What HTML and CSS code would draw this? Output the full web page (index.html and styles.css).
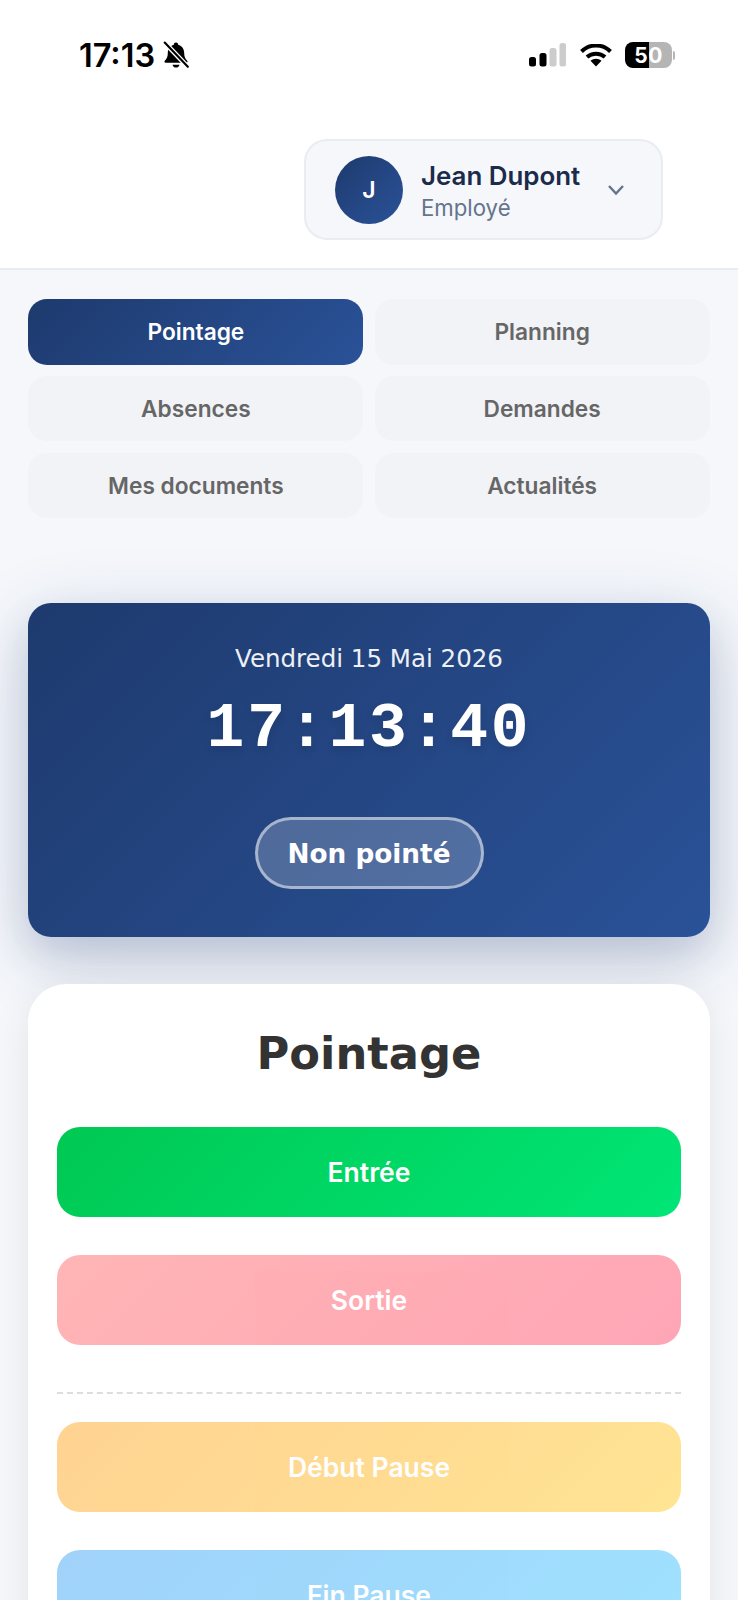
FILE: index.html
```html
<!DOCTYPE html>
<html>
<head lang="fr">
    <meta charset="UTF-8">
    <title>Pointage</title>

    <link rel="stylesheet" href="styles.css">
</head>
<body>
    <div class="screen">
        <header class="top">
            <div class="status">
                <div class="status-left">
                    <span class="status-time">17:13</span>
                    <svg class="bell" viewBox="0 0 26 26" width="28" height="28">
                        <path d="M13 1.500c1.200 0 2 .8 2 1.900 3.600.9 5.600 3.900 5.600 7.800 0 3.600 1 5.400 2.800 7.100.7.700.3 1.900-.8 1.900H3.400c-1.100 0-1.500-1.200-.8-1.900 1.800-1.700 2.800-3.500 2.800-7.100 0-3.900 2-6.900 5.600-7.800 0-1.100.8-1.900 2-1.900z" fill="#000"/>
                        <path d="M9.800 22h6.400c-.2 1.500-1.500 2.700-3.200 2.700S10 23.500 9.800 22z" fill="#000"/>
                        <path d="M2.500 1.500 L24 24" stroke="#fff" stroke-width="4.500" fill="none"/>
                        <path d="M2.500 1.500 L24 24" stroke="#000" stroke-width="2" stroke-linecap="round" fill="none"/>
                    </svg>
                </div>
                <div class="status-right">
                    <svg class="signal" viewBox="0 0 37 24" width="37" height="24">
                        <rect x="0" y="14" width="7" height="9.500" rx="2.500" fill="#000"/>
                        <rect x="10.500" y="10" width="7" height="13.500" rx="2.500" fill="#000"/>
                        <rect x="20.500" y="5" width="7" height="18.500" rx="2.500" fill="#ccc"/>
                        <rect x="30.500" y="0" width="6.500" height="23.500" rx="2.500" fill="#ccc"/>
                    </svg>
                    <svg class="wifi" viewBox="0 0 32 23" width="32" height="23">
                        <path d="M1.500 7.500 C9.500 -0.500 22.500 -0.500 30.500 7.500" stroke="#000" stroke-width="4" fill="none"/>
                        <path d="M7 13 C12 8.500 20 8.500 25 13" stroke="#000" stroke-width="4" fill="none"/>
                        <path d="M10.500 16.700 C13.500 14 18.500 14 21.500 16.700 L16 22.500 Z" fill="#000"/>
                    </svg>
                    <div class="battery">
                        <div class="battery-body">
                            <span class="battery-level">50</span>
                        </div>
                        <span class="battery-nub"></span>
                    </div>
                </div>
            </div>
            <div class="user-row">
                <div class="user-card">
                    <div class="avatar">J</div>
                    <div class="user-info">
                        <div class="user-name">Jean Dupont</div>
                        <div class="user-role">Employé</div>
                    </div>
                    <svg class="chevron" viewBox="0 0 18 12" width="18" height="12">
                        <path d="M2 2 L9 9.500 L16 2" stroke="#64748b" stroke-width="2.400" fill="none"/>
                    </svg>
                </div>
            </div>
        </header>

        <nav class="tabs">
            <a class="tab active">Pointage</a>
            <a class="tab">Planning</a>
            <a class="tab">Absences</a>
            <a class="tab">Demandes</a>
            <a class="tab">Mes documents</a>
            <a class="tab">Actualités</a>
        </nav>

        <main class="content">
            <section class="clock">
                <div class="clock-date">Vendredi 15 Mai 2026</div>
                <div class="clock-time">17:13:40</div>
                <div class="clock-badge">Non pointé</div>
            </section>

            <section class="panel">
                <h2 class="panel-title">Pointage</h2>
                <button class="btn btn-in">Entrée</button>
                <button class="btn btn-out">Sortie</button>
                <hr class="divider">
                <button class="btn btn-break">Début Pause</button>
                <button class="btn btn-resume">Fin Pause</button>
            </section>
        </main>
    </div>
</body>
</html>
```

FILE: styles.css
```css
* {
    box-sizing: border-box;
}

body {
    margin: 0;
    background: #f5f7fb;
    font-family: "Inter", "Liberation Sans", sans-serif;
}

.screen {
    height: 1600px;
    overflow: hidden;
}

/* top bar */
.top {
    height: 270px;
    background: #fff;
    border-bottom: 2px solid #e9ecf1;
}

.status {
    display: flex;
    justify-content: space-between;
    align-items: center;
    height: 26px;
    padding: 0 63px 0 79px;
    position: relative;
    top: 42px;
}

.status-left {
    display: flex;
    align-items: center;
    gap: 7px;
}

.status-time {
    font-size: 32.500px;
    font-weight: 600;
    color: #000;
}

.status-right {
    display: flex;
    align-items: center;
}

.signal {
    margin-right: 14px;
}

.wifi {
    margin-right: 13px;
}

.battery {
    display: flex;
    align-items: center;
    gap: 1px;
}

.battery-body {
    width: 47px;
    height: 26px;
    border-radius: 8px;
    background: linear-gradient(90deg, #000 0, #000 51%, #b5b5b5 51%, #b5b5b5 100%);
    display: flex;
    align-items: center;
    justify-content: center;
}

.battery-level {
    font-size: 21px;
    font-weight: 700;
    color: #fff;
    letter-spacing: 0.5px;
}

.battery-nub {
    width: 2px;
    height: 9px;
    border-radius: 0 2px 2px 0;
    background: #b5b5b5;
}

.user-row {
    display: flex;
    justify-content: flex-end;
    padding: 113px 75px 0 0;
}

.user-card {
    display: flex;
    align-items: center;
    width: 359px;
    height: 101px;
    padding: 0 36px 0 29px;
    background: #f5f7fb;
    border: 2px solid #e9ecf1;
    border-radius: 23px;
}

.avatar {
    flex: none;
    width: 68px;
    height: 68px;
    border-radius: 50%;
    background: linear-gradient(135deg, #1e3a6e, #2a5298);
    color: #fff;
    font-size: 23px;
    font-weight: 600;
    display: flex;
    align-items: center;
    justify-content: center;
}

.user-info {
    margin-left: 18px;
    flex: 1;
    padding-top: 2px;
}

.user-name {
    font-size: 25.900px;
    font-weight: 600;
    color: #1a2b4b;
    line-height: 33px;
}

.user-role {
    font-size: 22.200px;
    color: #64748b;
    line-height: 30px;
    margin-top: 1px;
}

/* tabs */
.tabs {
    display: grid;
    grid-template-columns: 1fr 1fr;
    gap: 11.350px;
    padding: 29px 28.400px 0;
}

.tab {
    height: 65.500px;
    display: flex;
    align-items: center;
    justify-content: center;
    border-radius: 19px;
    background: #f1f3f7;
    color: #666;
    font-size: 22.700px;
    font-weight: 600;
}

.tab.active {
    background: linear-gradient(135deg, #1e3a6e, #2a5298);
    color: #fff;
}

/* clock */
.content {
    padding: 85px 28.400px 0;
}

.clock {
    height: 334px;
    padding-top: 40px;
    border-radius: 23px;
    background: linear-gradient(135deg, #1e3a6e, #2a5298);
    box-shadow: 0 19px 76px rgba(30, 58, 110, 0.2), 0 19px 38px rgba(30, 58, 110, 0.14);
    color: #fff;
    text-align: center;
    font-family: "DejaVu Sans", sans-serif;
}

.clock-date {
    font-size: 24.500px;
    line-height: 32px;
    opacity: 0.92;
}

.clock-time {
    margin-top: 19px;
    font-family: "Liberation Mono", monospace;
    font-size: 63px;
    font-weight: 700;
    line-height: 72px;
    letter-spacing: 2.800px;
    text-shadow: 0 4px 8px rgba(0, 0, 0, 0.1);
}

.clock-badge {
    width: 229px;
    height: 72px;
    margin: 51px auto 0;
    border: 3.800px solid rgba(255, 255, 255, 0.5);
    border-radius: 36px;
    background: rgba(255, 255, 255, 0.2);
    font-size: 26.300px;
    font-weight: 700;
    line-height: 69px;
}

/* pointage panel */
.panel {
    margin-top: 47px;
    height: 760px;
    padding: 0 28.400px;
    background: #fff;
    border-radius: 38px;
    box-shadow: 0 8px 38px rgba(0, 0, 0, 0.08);
}

.panel-title {
    margin: 0;
    padding-top: 42px;
    height: 143px;
    font-family: "DejaVu Sans", sans-serif;
    font-size: 44.800px;
    font-weight: 700;
    line-height: 56px;
    color: #333;
    text-align: center;
}

.btn {
    display: block;
    width: 100%;
    height: 90px;
    margin-bottom: 38px;
    border: 0;
    border-radius: 23px;
    color: #fff;
    font-family: "Inter", "Liberation Sans", sans-serif;
    font-size: 26.500px;
    font-weight: 600;
}

.btn-in {
    background: linear-gradient(135deg, #00c853, #00e676);
}

.btn-out {
    background: linear-gradient(135deg, #ff6b6b, #ff4d6d);
    opacity: 0.5;
}

.btn-break {
    background: linear-gradient(135deg, #ffa726, #ffca28);
    opacity: 0.5;
}

.btn-resume {
    background: linear-gradient(135deg, #42a5f5, #40c4ff);
    opacity: 0.5;
}

.divider {
    height: 0;
    margin: 47px 0 28px;
    border: 0;
    border-top: 2px dashed #ddd;
}
```
